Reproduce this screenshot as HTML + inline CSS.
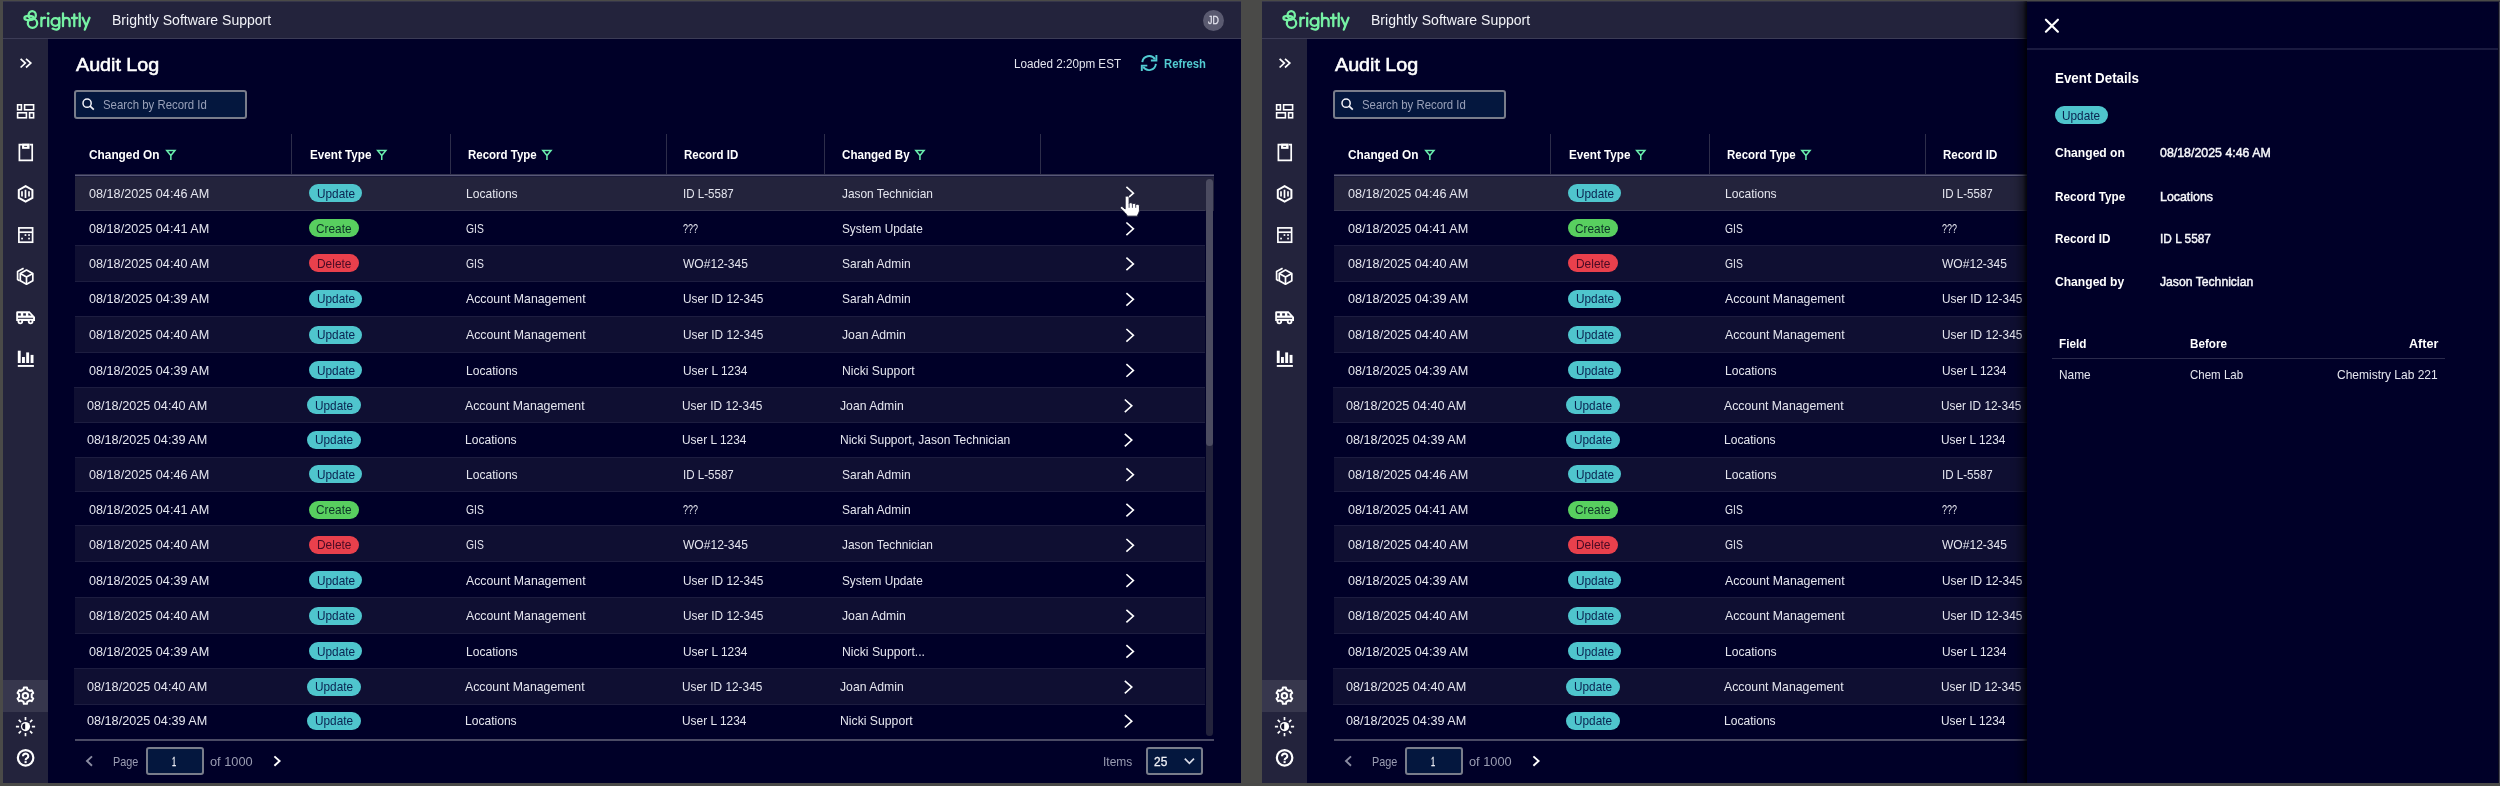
<!DOCTYPE html>
<html><head><meta charset="utf-8"><title>Audit Log</title><style>
html,body{margin:0;padding:0}body{width:2500px;height:786px;overflow:hidden;background:#4a4a48;position:relative;font-family:"Liberation Sans",sans-serif}
.p{position:absolute;top:0;height:786px;overflow:hidden;will-change:transform}
.b{position:absolute;display:block}
.t{position:absolute;display:block;white-space:nowrap;line-height:20px;transform-origin:0 0}
</style></head><body>
<div class="p" style="left:0;width:1241px"><div class="b" style="left:3px;top:2px;width:1238px;height:781px;background:#000028;"></div><div class="b" style="left:3px;top:1px;width:1238px;height:1px;background:#35354a;"></div><div class="b" style="left:3px;top:2px;width:1238px;height:36px;background:#23233c;"></div><div class="b" style="left:3px;top:38px;width:1238px;height:1px;background:#3c3c56;"></div><div class="b" style="left:3px;top:39px;width:45px;height:744px;background:#23233c;"></div><div class="b" style="left:3px;top:680px;width:45px;height:31.5px;background:#37374d;"></div><svg class="b" style="left:0px;top:0px;" width="120" height="40" viewBox="0 0 120 40"><g fill="none" stroke="#76f2a4" stroke-width="2.3" stroke-linecap="round" stroke-linejoin="round"><ellipse cx="32.2" cy="15.2" rx="3.65" ry="4"/><ellipse cx="32.5" cy="23.3" rx="4.7" ry="4.6"/><ellipse cx="29" cy="18" rx="4.6" ry="2.05"/><path d="M41.4 17.6 V26.2 M41.4 21.2 C41.4 18.6 43 17.6 45.2 17.8"/><path d="M48.2 17.8 V26.2"/><circle cx="55.4" cy="22" r="3.9"/><path d="M59.3 17.8 V26.4 C59.3 29.4 56.4 30.6 52.6 28.6"/><path d="M63 13.3 V26.2 M63 21.4 C63 16.8 69.6 16.8 69.6 21.4 V26.2"/><path d="M74.3 14.3 V26.2 M71.9 18 H77"/><path d="M79.7 13.3 V26.2"/><path d="M82.6 17.8 L86.1 25.6 M89.5 17.8 L84.8 29.6"/></g><circle cx="48.2" cy="13.6" r="1.45" fill="#76f2a4"/></svg><span class="t" style="left:111.80px;top:10px;font-size:14px;color:#f2f3f8;transform:scaleX(1.0028);">Brightly Software Support</span><div class="b" style="left:1203px;top:10px;width:21px;height:21px;border-radius:50%;background:#5a5a70"></div><span class="t" style="left:1208.40px;top:10px;font-size:11px;color:#e4e4ee;transform:scaleX(0.8000);-webkit-text-stroke:0.3px #e4e4ee;">JD</span><span class="t" style="left:75.80px;top:55px;font-size:18px;color:#ffffff;transform:scaleX(1.0943);-webkit-text-stroke:0.55px #fff;">Audit Log</span><span class="t" style="left:1014.10px;top:54px;font-size:12.5px;color:#e4e5ee;transform:scaleX(0.9335);">Loaded 2:20pm EST</span><span class="t" style="left:1163.80px;top:54px;font-size:12px;font-weight:700;color:#52cbd2;transform:scaleX(0.9389);">Refresh</span><div class="b" style="left:74.3px;top:90px;width:172.6px;height:28.7px;box-sizing:border-box;border:2px solid #797d8b;border-radius:3px;background:#04173e"></div><span class="t" style="left:102.80px;top:95px;font-size:13px;color:#98a0b8;transform:scaleX(0.8759);">Search by Record Id</span><span class="t" style="left:88.90px;top:145px;font-size:13px;font-weight:700;color:#ffffff;transform:scaleX(0.9113);">Changed On</span><span class="t" style="left:309.50px;top:145px;font-size:13px;font-weight:700;color:#ffffff;transform:scaleX(0.8995);">Event Type</span><span class="t" style="left:467.70px;top:145px;font-size:13px;font-weight:700;color:#ffffff;transform:scaleX(0.8836);">Record Type</span><span class="t" style="left:684.00px;top:145px;font-size:13px;font-weight:700;color:#ffffff;transform:scaleX(0.8847);">Record ID</span><span class="t" style="left:842.30px;top:145px;font-size:13px;font-weight:700;color:#ffffff;transform:scaleX(0.8923);">Changed By</span><div class="b" style="left:291.1px;top:133.5px;width:1px;height:40.5px;background:#2d2d4a;"></div><div class="b" style="left:449.5px;top:133.5px;width:1px;height:40.5px;background:#2d2d4a;"></div><div class="b" style="left:665.8px;top:133.5px;width:1px;height:40.5px;background:#2d2d4a;"></div><div class="b" style="left:824.1px;top:133.5px;width:1px;height:40.5px;background:#2d2d4a;"></div><div class="b" style="left:1039.7px;top:133.5px;width:1px;height:40.5px;background:#2d2d4a;"></div><div class="b" style="left:75.2px;top:174px;width:1139.2px;height:1px;background:#33334f;"></div><div class="b" style="left:75.2px;top:175px;width:1139.2px;height:1px;background:#585878;"></div><div class="b" style="left:75.2px;top:176px;width:1139.2px;height:34.8px;background:#23233c;"></div><div class="b" style="left:75.2px;top:176px;width:1139.2px;height:1px;background:#18183a;"></div><span class="t" style="left:89.00px;top:184px;font-size:13px;color:#e4e5ee;transform:scaleX(0.9731);">08/18/2025 04:46 AM</span><div class="b" style="left:309px;top:183.85px;width:53.2px;height:18px;border-radius:9px;background:#4fc5cd"></div><span class="t" style="left:316.60px;top:184px;font-size:13px;color:#0a2350;transform:scaleX(0.9075);">Update</span><span class="t" style="left:466.40px;top:184px;font-size:13px;color:#e4e5ee;transform:scaleX(0.9276);">Locations</span><span class="t" style="left:683.10px;top:184px;font-size:13px;color:#e4e5ee;transform:scaleX(0.8893);">ID L-5587</span><span class="t" style="left:841.70px;top:184px;font-size:13px;color:#e4e5ee;transform:scaleX(0.9136);">Jason Technician</span><div class="b" style="left:75.2px;top:210.3px;width:1130.1px;height:1px;background:#34344f;"></div><span class="t" style="left:89.00px;top:219px;font-size:13px;color:#e4e5ee;transform:scaleX(0.9731);">08/18/2025 04:41 AM</span><div class="b" style="left:309px;top:219.2px;width:49.6px;height:18px;border-radius:9px;background:#58cf5f"></div><span class="t" style="left:316.05px;top:219px;font-size:13px;color:#0c3328;transform:scaleX(0.9103);">Create</span><span class="t" style="left:466.40px;top:219px;font-size:13px;color:#e4e5ee;transform:scaleX(0.7955);">GIS</span><span class="t" style="left:683.10px;top:219px;font-size:13px;color:#e4e5ee;transform:scaleX(0.6897);">???</span><span class="t" style="left:842.00px;top:219px;font-size:13px;color:#e4e5ee;transform:scaleX(0.9080);">System Update</span><div class="b" style="left:75.2px;top:245.5px;width:1130.1px;height:35.5px;background:#0f0f32;"></div><div class="b" style="left:75.2px;top:245px;width:1130.1px;height:1px;background:#1d1d40;"></div><span class="t" style="left:89.00px;top:254px;font-size:13px;color:#e4e5ee;transform:scaleX(0.9731);">08/18/2025 04:40 AM</span><div class="b" style="left:309px;top:254.3px;width:49.6px;height:18px;border-radius:9px;background:#e9404c"></div><span class="t" style="left:316.55px;top:254px;font-size:13px;color:#4a0a24;transform:scaleX(0.9169);">Delete</span><span class="t" style="left:466.40px;top:254px;font-size:13px;color:#e4e5ee;transform:scaleX(0.7955);">GIS</span><span class="t" style="left:683.10px;top:254px;font-size:13px;color:#e4e5ee;transform:scaleX(0.9269);">WO#12-345</span><span class="t" style="left:842.00px;top:254px;font-size:13px;color:#e4e5ee;transform:scaleX(0.9208);">Sarah Admin</span><div class="b" style="left:75.2px;top:280.5px;width:1130.1px;height:1px;background:#1d1d40;"></div><span class="t" style="left:89.00px;top:289px;font-size:13px;color:#e4e5ee;transform:scaleX(0.9731);">08/18/2025 04:39 AM</span><div class="b" style="left:309px;top:289.75px;width:53.2px;height:18px;border-radius:9px;background:#4fc5cd"></div><span class="t" style="left:316.60px;top:289px;font-size:13px;color:#0a2350;transform:scaleX(0.9075);">Update</span><span class="t" style="left:466.40px;top:289px;font-size:13px;color:#e4e5ee;transform:scaleX(0.9455);">Account Management</span><span class="t" style="left:683.10px;top:289px;font-size:13px;color:#e4e5ee;transform:scaleX(0.9112);">User ID 12-345</span><span class="t" style="left:842.00px;top:289px;font-size:13px;color:#e4e5ee;transform:scaleX(0.9208);">Sarah Admin</span><div class="b" style="left:75.2px;top:316.3px;width:1130.1px;height:36px;background:#0f0f32;"></div><div class="b" style="left:75.2px;top:315.8px;width:1130.1px;height:1px;background:#1d1d40;"></div><span class="t" style="left:89.00px;top:325px;font-size:13px;color:#e4e5ee;transform:scaleX(0.9731);">08/18/2025 04:40 AM</span><div class="b" style="left:309px;top:325.7px;width:53.2px;height:18px;border-radius:9px;background:#4fc5cd"></div><span class="t" style="left:316.60px;top:325px;font-size:13px;color:#0a2350;transform:scaleX(0.9075);">Update</span><span class="t" style="left:466.40px;top:325px;font-size:13px;color:#e4e5ee;transform:scaleX(0.9455);">Account Management</span><span class="t" style="left:683.10px;top:325px;font-size:13px;color:#e4e5ee;transform:scaleX(0.9112);">User ID 12-345</span><span class="t" style="left:841.70px;top:325px;font-size:13px;color:#e4e5ee;transform:scaleX(0.9382);">Joan Admin</span><div class="b" style="left:75.2px;top:351.8px;width:1130.1px;height:1px;background:#1d1d40;"></div><span class="t" style="left:89.00px;top:361px;font-size:13px;color:#e4e5ee;transform:scaleX(0.9731);">08/18/2025 04:39 AM</span><div class="b" style="left:309px;top:360.85px;width:53.2px;height:18px;border-radius:9px;background:#4fc5cd"></div><span class="t" style="left:316.60px;top:361px;font-size:13px;color:#0a2350;transform:scaleX(0.9075);">Update</span><span class="t" style="left:466.40px;top:361px;font-size:13px;color:#e4e5ee;transform:scaleX(0.9276);">Locations</span><span class="t" style="left:683.10px;top:361px;font-size:13px;color:#e4e5ee;transform:scaleX(0.9165);">User L 1234</span><span class="t" style="left:842.00px;top:361px;font-size:13px;color:#e4e5ee;transform:scaleX(0.9396);">Nicki Support</span><div class="b" style="left:73.6px;top:387.1px;width:1131.7px;height:35.2px;background:#0f0f32;"></div><div class="b" style="left:73.6px;top:386.6px;width:1131.7px;height:1px;background:#1d1d40;"></div><span class="t" style="left:87.40px;top:396px;font-size:13px;color:#e4e5ee;transform:scaleX(0.9731);">08/18/2025 04:40 AM</span><div class="b" style="left:307.4px;top:396.2px;width:53.2px;height:18px;border-radius:9px;background:#4fc5cd"></div><span class="t" style="left:315.00px;top:396px;font-size:13px;color:#0a2350;transform:scaleX(0.9075);">Update</span><span class="t" style="left:464.80px;top:396px;font-size:13px;color:#e4e5ee;transform:scaleX(0.9455);">Account Management</span><span class="t" style="left:681.50px;top:396px;font-size:13px;color:#e4e5ee;transform:scaleX(0.9112);">User ID 12-345</span><span class="t" style="left:840.10px;top:396px;font-size:13px;color:#e4e5ee;transform:scaleX(0.9382);">Joan Admin</span><div class="b" style="left:73.6px;top:421.8px;width:1131.7px;height:1px;background:#1d1d40;"></div><span class="t" style="left:87.40px;top:430px;font-size:13px;color:#e4e5ee;transform:scaleX(0.9731);">08/18/2025 04:39 AM</span><div class="b" style="left:307.4px;top:430.5px;width:53.2px;height:18px;border-radius:9px;background:#4fc5cd"></div><span class="t" style="left:315.00px;top:430px;font-size:13px;color:#0a2350;transform:scaleX(0.9075);">Update</span><span class="t" style="left:464.80px;top:430px;font-size:13px;color:#e4e5ee;transform:scaleX(0.9276);">Locations</span><span class="t" style="left:681.50px;top:430px;font-size:13px;color:#e4e5ee;transform:scaleX(0.9165);">User L 1234</span><span class="t" style="left:840.40px;top:430px;font-size:13px;color:#e4e5ee;transform:scaleX(0.9255);">Nicki Support, Jason Technician</span><div class="b" style="left:75.2px;top:457.2px;width:1130.1px;height:34.1px;background:#0f0f32;"></div><div class="b" style="left:75.2px;top:456.7px;width:1130.1px;height:1px;background:#1d1d40;"></div><span class="t" style="left:89.00px;top:465px;font-size:13px;color:#e4e5ee;transform:scaleX(0.9731);">08/18/2025 04:46 AM</span><div class="b" style="left:309px;top:465.1px;width:53.2px;height:18px;border-radius:9px;background:#4fc5cd"></div><span class="t" style="left:316.60px;top:465px;font-size:13px;color:#0a2350;transform:scaleX(0.9075);">Update</span><span class="t" style="left:466.40px;top:465px;font-size:13px;color:#e4e5ee;transform:scaleX(0.9276);">Locations</span><span class="t" style="left:683.10px;top:465px;font-size:13px;color:#e4e5ee;transform:scaleX(0.8893);">ID L-5587</span><span class="t" style="left:842.00px;top:465px;font-size:13px;color:#e4e5ee;transform:scaleX(0.9208);">Sarah Admin</span><div class="b" style="left:75.2px;top:490.8px;width:1130.1px;height:1px;background:#1d1d40;"></div><span class="t" style="left:89.00px;top:500px;font-size:13px;color:#e4e5ee;transform:scaleX(0.9731);">08/18/2025 04:41 AM</span><div class="b" style="left:309px;top:500.5px;width:49.6px;height:18px;border-radius:9px;background:#58cf5f"></div><span class="t" style="left:316.05px;top:500px;font-size:13px;color:#0c3328;transform:scaleX(0.9103);">Create</span><span class="t" style="left:466.40px;top:500px;font-size:13px;color:#e4e5ee;transform:scaleX(0.7955);">GIS</span><span class="t" style="left:683.10px;top:500px;font-size:13px;color:#e4e5ee;transform:scaleX(0.6897);">???</span><span class="t" style="left:842.00px;top:500px;font-size:13px;color:#e4e5ee;transform:scaleX(0.9208);">Sarah Admin</span><div class="b" style="left:75.2px;top:525.8px;width:1130.1px;height:35.6px;background:#0f0f32;"></div><div class="b" style="left:75.2px;top:525.3px;width:1130.1px;height:1px;background:#1d1d40;"></div><span class="t" style="left:89.00px;top:535px;font-size:13px;color:#e4e5ee;transform:scaleX(0.9731);">08/18/2025 04:40 AM</span><div class="b" style="left:309px;top:535.7px;width:49.6px;height:18px;border-radius:9px;background:#e9404c"></div><span class="t" style="left:316.55px;top:535px;font-size:13px;color:#4a0a24;transform:scaleX(0.9169);">Delete</span><span class="t" style="left:466.40px;top:535px;font-size:13px;color:#e4e5ee;transform:scaleX(0.7955);">GIS</span><span class="t" style="left:683.10px;top:535px;font-size:13px;color:#e4e5ee;transform:scaleX(0.9269);">WO#12-345</span><span class="t" style="left:841.70px;top:535px;font-size:13px;color:#e4e5ee;transform:scaleX(0.9136);">Jason Technician</span><div class="b" style="left:75.2px;top:560.9px;width:1130.1px;height:1px;background:#1d1d40;"></div><span class="t" style="left:89.00px;top:571px;font-size:13px;color:#e4e5ee;transform:scaleX(0.9731);">08/18/2025 04:39 AM</span><div class="b" style="left:309px;top:570.95px;width:53.2px;height:18px;border-radius:9px;background:#4fc5cd"></div><span class="t" style="left:316.60px;top:571px;font-size:13px;color:#0a2350;transform:scaleX(0.9075);">Update</span><span class="t" style="left:466.40px;top:571px;font-size:13px;color:#e4e5ee;transform:scaleX(0.9455);">Account Management</span><span class="t" style="left:683.10px;top:571px;font-size:13px;color:#e4e5ee;transform:scaleX(0.9112);">User ID 12-345</span><span class="t" style="left:842.00px;top:571px;font-size:13px;color:#e4e5ee;transform:scaleX(0.9080);">System Update</span><div class="b" style="left:75.2px;top:597.2px;width:1130.1px;height:36px;background:#0f0f32;"></div><div class="b" style="left:75.2px;top:596.7px;width:1130.1px;height:1px;background:#1d1d40;"></div><span class="t" style="left:89.00px;top:606px;font-size:13px;color:#e4e5ee;transform:scaleX(0.9731);">08/18/2025 04:40 AM</span><div class="b" style="left:309px;top:606.5px;width:53.2px;height:18px;border-radius:9px;background:#4fc5cd"></div><span class="t" style="left:316.60px;top:606px;font-size:13px;color:#0a2350;transform:scaleX(0.9075);">Update</span><span class="t" style="left:466.40px;top:606px;font-size:13px;color:#e4e5ee;transform:scaleX(0.9455);">Account Management</span><span class="t" style="left:683.10px;top:606px;font-size:13px;color:#e4e5ee;transform:scaleX(0.9112);">User ID 12-345</span><span class="t" style="left:841.70px;top:606px;font-size:13px;color:#e4e5ee;transform:scaleX(0.9382);">Joan Admin</span><div class="b" style="left:75.2px;top:632.7px;width:1130.1px;height:1px;background:#1d1d40;"></div><span class="t" style="left:89.00px;top:642px;font-size:13px;color:#e4e5ee;transform:scaleX(0.9731);">08/18/2025 04:39 AM</span><div class="b" style="left:309px;top:641.8px;width:53.2px;height:18px;border-radius:9px;background:#4fc5cd"></div><span class="t" style="left:316.60px;top:642px;font-size:13px;color:#0a2350;transform:scaleX(0.9075);">Update</span><span class="t" style="left:466.40px;top:642px;font-size:13px;color:#e4e5ee;transform:scaleX(0.9276);">Locations</span><span class="t" style="left:683.10px;top:642px;font-size:13px;color:#e4e5ee;transform:scaleX(0.9165);">User L 1234</span><span class="t" style="left:842.00px;top:642px;font-size:13px;color:#e4e5ee;transform:scaleX(0.9418);">Nicki Support...</span><div class="b" style="left:73.6px;top:668px;width:1131.7px;height:36px;background:#0f0f32;"></div><div class="b" style="left:73.6px;top:667.5px;width:1131.7px;height:1px;background:#1d1d40;"></div><span class="t" style="left:87.40px;top:677px;font-size:13px;color:#e4e5ee;transform:scaleX(0.9731);">08/18/2025 04:40 AM</span><div class="b" style="left:307.4px;top:677.5px;width:53.2px;height:18px;border-radius:9px;background:#4fc5cd"></div><span class="t" style="left:315.00px;top:677px;font-size:13px;color:#0a2350;transform:scaleX(0.9075);">Update</span><span class="t" style="left:464.80px;top:677px;font-size:13px;color:#e4e5ee;transform:scaleX(0.9455);">Account Management</span><span class="t" style="left:681.50px;top:677px;font-size:13px;color:#e4e5ee;transform:scaleX(0.9112);">User ID 12-345</span><span class="t" style="left:840.10px;top:677px;font-size:13px;color:#e4e5ee;transform:scaleX(0.9382);">Joan Admin</span><div class="b" style="left:73.6px;top:703.5px;width:1131.7px;height:1px;background:#1d1d40;"></div><span class="t" style="left:87.40px;top:711px;font-size:13px;color:#e4e5ee;transform:scaleX(0.9731);">08/18/2025 04:39 AM</span><div class="b" style="left:307.4px;top:711.6px;width:53.2px;height:18px;border-radius:9px;background:#4fc5cd"></div><span class="t" style="left:315.00px;top:711px;font-size:13px;color:#0a2350;transform:scaleX(0.9075);">Update</span><span class="t" style="left:464.80px;top:711px;font-size:13px;color:#e4e5ee;transform:scaleX(0.9276);">Locations</span><span class="t" style="left:681.50px;top:711px;font-size:13px;color:#e4e5ee;transform:scaleX(0.9165);">User L 1234</span><span class="t" style="left:840.40px;top:711px;font-size:13px;color:#e4e5ee;transform:scaleX(0.9396);">Nicki Support</span><div class="b" style="left:1205.6px;top:178.7px;width:7.1px;height:557px;border-radius:3.5px;background:#23233c"></div><div class="b" style="left:1205.6px;top:178.7px;width:7.1px;height:267px;border-radius:3.5px;background:#4b4b60"></div><div class="b" style="left:75.2px;top:739px;width:1139.2px;height:2px;background:#4b4b65;"></div><span class="t" style="left:113.30px;top:752px;font-size:13px;color:#9a9cb2;transform:scaleX(0.8362);">Page</span><div class="b" style="left:146.2px;top:746.8px;width:57.7px;height:28.5px;box-sizing:border-box;border:2px solid #797d8b;border-radius:3px;background:#04173e"></div><span class="t" style="left:172.20px;top:752px;font-size:13px;color:#f0f1f7;transform:scaleX(0.5655);-webkit-text-stroke:0.3px #f0f1f7;">1</span><span class="t" style="left:210.30px;top:752px;font-size:13px;color:#9a9cb2;transform:scaleX(0.9844);">of 1000</span><span class="t" style="left:1102.60px;top:752px;font-size:13px;color:#9a9cb2;transform:scaleX(0.9197);">Items</span><div class="b" style="left:1146.2px;top:746.8px;width:57.1px;height:28.5px;box-sizing:border-box;border:2px solid #797d8b;border-radius:3px;background:#04173e"></div><span class="t" style="left:1153.80px;top:752px;font-size:13px;color:#f0f1f7;transform:scaleX(0.9172);-webkit-text-stroke:0.3px #f0f1f7;">25</span><svg class="b" style="left:0px;top:0px;" width="1241" height="786" viewBox="0 0 1241 786"><path d="M20.6 58.8 L25.3 63.1 L20.6 67.5 M26 58.8 L30.8 63.1 L26 67.5" fill="none" stroke="#fff" stroke-width="1.7"/><g fill="none" stroke="#fff" stroke-width="1.6"><rect x="17.6" y="104.8" width="3.8" height="5"/><rect x="24.6" y="104.8" width="9" height="5"/><rect x="17.6" y="112.8" width="8.8" height="5"/><rect x="29.6" y="112.8" width="4" height="5"/></g><g fill="none" stroke="#fff" stroke-width="1.7"><path d="M22 144.7 H19.4 V160.3 H32.2 V144.7 H29.6"/><rect x="22.9" y="144.4" width="5.8" height="3.6" fill="#fff"/></g><rect x="24.2" y="145.9" width="2.9" height="0.9" fill="#23233c"/><g fill="none" stroke="#fff"><path d="M25.6 186.2 L32.4 190 V197.8 L25.6 201.7 L18.8 197.8 V190 Z" stroke-width="2"/><path d="M25.5 189.8 V198 M22 191.3 V196.6 M29 191.3 V196.6" stroke-width="1.7"/></g><g fill="none" stroke="#fff" stroke-width="1.7"><rect x="18.9" y="227.9" width="13.7" height="14.3"/><path d="M18.9 232.2 H32.6"/></g><g fill="#fff"><rect x="24.6" y="234.2" width="1.7" height="1.7"/><rect x="28.2" y="234.2" width="1.7" height="1.7"/><rect x="21.2" y="237.7" width="1.7" height="1.7"/><rect x="28.2" y="237.7" width="1.7" height="1.7"/></g><g fill="none" stroke="#fff" stroke-width="1.7" stroke-linejoin="round"><path d="M26.5 270 L32.8 273.5 V280.7 L26.5 284.2 L20.3 280.7 V273.5 Z"/><path d="M20.3 273.5 L26.5 277 L32.8 273.5 M26.5 277 V284.2"/><path d="M23.6 268.2 L17.6 271.6 V279.6 L19.6 280.8"/></g><path d="M17.5 311.3 H29.6 L35 317 V321.1 H16.2 V312.6 A1.3 1.3 0 0 1 17.5 311.3 Z" fill="#fff"/><circle cx="20.3" cy="321.5" r="2.8" fill="#fff"/><circle cx="30.6" cy="321.5" r="2.8" fill="#fff"/><g fill="#23233c"><rect x="18.1" y="313.3" width="2.7" height="2.3"/><rect x="23.2" y="313.3" width="2.7" height="2.3"/><path d="M28.3 313.3 H29.2 L31.4 315.6 H28.3 Z"/><rect x="17.9" y="317.8" width="15.2" height="1"/><circle cx="20.3" cy="321.6" r="1"/><circle cx="30.6" cy="321.6" r="1"/></g><g fill="#fff"><rect x="17.8" y="350.7" width="2.9" height="12.3"/><rect x="22" y="357" width="2.9" height="6"/><rect x="26.2" y="352.4" width="2.9" height="10.6"/><rect x="30.6" y="354.9" width="2.9" height="8.1"/><rect x="17.8" y="365" width="16.1" height="1.9"/></g><path d="M23.50 689.48 L23.82 687.55 L26.98 687.55 L27.30 689.48 L29.83 690.95 L31.66 690.25 L33.25 693.00 L31.73 694.24 L31.73 697.16 L33.25 698.40 L31.66 701.15 L29.83 700.45 L27.30 701.92 L26.98 703.85 L23.82 703.85 L23.50 701.92 L20.97 700.45 L19.14 701.15 L17.55 698.40 L19.07 697.16 L19.07 694.24 L17.55 693.00 L19.14 690.25 L20.97 690.95 Z" fill="none" stroke="#fff" stroke-width="2" stroke-linejoin="round"/><circle cx="25.4" cy="695.7" r="2.7" fill="none" stroke="#fff" stroke-width="2"/><path d="M31.90 726.60 L35.10 726.60 M30.03 731.13 L32.29 733.39 M25.50 733.00 L25.50 736.20 M20.97 731.13 L18.71 733.39 M19.10 726.60 L15.90 726.60 M20.97 722.07 L18.71 719.81 M25.50 720.20 L25.50 717.00 M30.03 722.07 L32.29 719.81 " stroke="#fff" stroke-width="1.7" fill="none"/><circle cx="25.5" cy="726.6" r="4.6" fill="#fff"/><path d="M25.2 723.6 a3 3 0 0 0 0 6 Z" fill="#101028"/><circle cx="25.6" cy="757.8" r="7.75" fill="none" stroke="#fff" stroke-width="2.2"/><path d="M23 756.2 a2.65 2.5 0 1 1 4.1 2 c-1.1 .7 -1.5 1.1 -1.5 2" fill="none" stroke="#fff" stroke-width="2.1"/><rect x="24.55" y="761.1" width="2.1" height="2" fill="#fff"/><path d="M166.75 150.55 h8.2 l-4.1 5 z M170.85 155.40 v4.6" fill="none" stroke="#6aeeae" stroke-width="1.5" stroke-linejoin="miter"/><path d="M377.65 150.55 h8.2 l-4.1 5 z M381.75 155.40 v4.6" fill="none" stroke="#6aeeae" stroke-width="1.5" stroke-linejoin="miter"/><path d="M542.85 150.55 h8.2 l-4.1 5 z M546.95 155.40 v4.6" fill="none" stroke="#6aeeae" stroke-width="1.5" stroke-linejoin="miter"/><path d="M915.85 150.55 h8.2 l-4.1 5 z M919.95 155.40 v4.6" fill="none" stroke="#6aeeae" stroke-width="1.5" stroke-linejoin="miter"/><path d="M1126.40 186.85 l7 6.3 l-7 6.3" fill="none" stroke="#fff" stroke-width="1.6"/><path d="M1126.40 222.50 l7 6.3 l-7 6.3" fill="none" stroke="#fff" stroke-width="1.6"/><path d="M1126.40 257.60 l7 6.3 l-7 6.3" fill="none" stroke="#fff" stroke-width="1.6"/><path d="M1126.40 293.05 l7 6.3 l-7 6.3" fill="none" stroke="#fff" stroke-width="1.6"/><path d="M1126.40 329.00 l7 6.3 l-7 6.3" fill="none" stroke="#fff" stroke-width="1.6"/><path d="M1126.40 364.15 l7 6.3 l-7 6.3" fill="none" stroke="#fff" stroke-width="1.6"/><path d="M1124.80 399.50 l7 6.3 l-7 6.3" fill="none" stroke="#fff" stroke-width="1.6"/><path d="M1124.80 433.80 l7 6.3 l-7 6.3" fill="none" stroke="#fff" stroke-width="1.6"/><path d="M1126.40 468.40 l7 6.3 l-7 6.3" fill="none" stroke="#fff" stroke-width="1.6"/><path d="M1126.40 503.80 l7 6.3 l-7 6.3" fill="none" stroke="#fff" stroke-width="1.6"/><path d="M1126.40 539.00 l7 6.3 l-7 6.3" fill="none" stroke="#fff" stroke-width="1.6"/><path d="M1126.40 574.25 l7 6.3 l-7 6.3" fill="none" stroke="#fff" stroke-width="1.6"/><path d="M1126.40 609.80 l7 6.3 l-7 6.3" fill="none" stroke="#fff" stroke-width="1.6"/><path d="M1126.40 645.10 l7 6.3 l-7 6.3" fill="none" stroke="#fff" stroke-width="1.6"/><path d="M1124.80 680.80 l7 6.3 l-7 6.3" fill="none" stroke="#fff" stroke-width="1.6"/><path d="M1124.80 714.90 l7 6.3 l-7 6.3" fill="none" stroke="#fff" stroke-width="1.6"/><circle cx="87.1" cy="103.2" r="4.1" fill="none" stroke="#f4f4fa" stroke-width="1.5"/><path d="M90.1 106.2 L93.8 109.6" stroke="#f4f4fa" stroke-width="1.7"/><g fill="none" stroke="#52cbd2" stroke-width="1.9"><path d="M1142.3 62.2 A6.9 6.9 0 0 1 1155 59.3"/><path d="M1156.4 55 V60.5 H1150.9"/><path d="M1155.9 63.9 A6.9 6.9 0 0 1 1143.2 66.8"/><path d="M1141.8 71.1 V65.6 H1147.3"/></g><path d="M92 756.4 L87 761 L92 765.7" fill="none" stroke="#8a8ca2" stroke-width="1.9"/><path d="M274.4 756.4 L279.6 761 L274.4 765.7" fill="none" stroke="#fff" stroke-width="1.9"/><path d="M1184.8 758.6 L1189.4 763.3 L1194 758.6" fill="none" stroke="#d8dae6" stroke-width="1.7"/></svg><svg class="b" style="left:1118.6px;top:195px" width="24.2" height="23.4" viewBox="-1 -1 22 23" preserveAspectRatio="none"><path d="M4.6 1.6 C4.6 -0.4 8.2 -0.4 8.2 1.6 V7.4 C8.6 6.2 11 6.2 11.2 7.6 V8 C11.6 6.8 14 6.8 14.2 8.2 V8.8 C14.8 7.8 17.4 7.8 17.6 9.6 V14 C17.6 16.5 16 17.5 15.8 19.8 H6.6 C6 17.5 3.5 15.5 0.5 12.3 C-0.4 11 1 9.6 2.2 10.6 L4.6 12.8 Z" fill="#fff" stroke="#1a1a32" stroke-width="0.9" stroke-linejoin="round"/><path d="M8.2 7.4 V11.6 M11.2 8 V11.6 M14.2 8.8 V11.6" stroke="#2a2a44" stroke-width=".8" fill="none"/></svg></div>
<div class="p" style="left:1259px;width:1241px"><div class="b" style="left:3px;top:2px;width:1238px;height:781px;background:#000028;"></div><div class="b" style="left:3px;top:1px;width:1238px;height:1px;background:#35354a;"></div><div class="b" style="left:3px;top:2px;width:1238px;height:36px;background:#23233c;"></div><div class="b" style="left:3px;top:38px;width:1238px;height:1px;background:#3c3c56;"></div><div class="b" style="left:3px;top:39px;width:45px;height:744px;background:#23233c;"></div><div class="b" style="left:3px;top:680px;width:45px;height:31.5px;background:#37374d;"></div><svg class="b" style="left:0px;top:0px;" width="120" height="40" viewBox="0 0 120 40"><g fill="none" stroke="#76f2a4" stroke-width="2.3" stroke-linecap="round" stroke-linejoin="round"><ellipse cx="32.2" cy="15.2" rx="3.65" ry="4"/><ellipse cx="32.5" cy="23.3" rx="4.7" ry="4.6"/><ellipse cx="29" cy="18" rx="4.6" ry="2.05"/><path d="M41.4 17.6 V26.2 M41.4 21.2 C41.4 18.6 43 17.6 45.2 17.8"/><path d="M48.2 17.8 V26.2"/><circle cx="55.4" cy="22" r="3.9"/><path d="M59.3 17.8 V26.4 C59.3 29.4 56.4 30.6 52.6 28.6"/><path d="M63 13.3 V26.2 M63 21.4 C63 16.8 69.6 16.8 69.6 21.4 V26.2"/><path d="M74.3 14.3 V26.2 M71.9 18 H77"/><path d="M79.7 13.3 V26.2"/><path d="M82.6 17.8 L86.1 25.6 M89.5 17.8 L84.8 29.6"/></g><circle cx="48.2" cy="13.6" r="1.45" fill="#76f2a4"/></svg><span class="t" style="left:111.80px;top:10px;font-size:14px;color:#f2f3f8;transform:scaleX(1.0028);">Brightly Software Support</span><div class="b" style="left:1203px;top:10px;width:21px;height:21px;border-radius:50%;background:#5a5a70"></div><span class="t" style="left:1208.40px;top:10px;font-size:11px;color:#e4e4ee;transform:scaleX(0.8000);-webkit-text-stroke:0.3px #e4e4ee;">JD</span><span class="t" style="left:75.80px;top:55px;font-size:18px;color:#ffffff;transform:scaleX(1.0943);-webkit-text-stroke:0.55px #fff;">Audit Log</span><span class="t" style="left:1014.10px;top:54px;font-size:12.5px;color:#e4e5ee;transform:scaleX(0.9335);">Loaded 2:20pm EST</span><span class="t" style="left:1163.80px;top:54px;font-size:12px;font-weight:700;color:#52cbd2;transform:scaleX(0.9389);">Refresh</span><div class="b" style="left:74.3px;top:90px;width:172.6px;height:28.7px;box-sizing:border-box;border:2px solid #797d8b;border-radius:3px;background:#04173e"></div><span class="t" style="left:102.80px;top:95px;font-size:13px;color:#98a0b8;transform:scaleX(0.8759);">Search by Record Id</span><span class="t" style="left:88.90px;top:145px;font-size:13px;font-weight:700;color:#ffffff;transform:scaleX(0.9113);">Changed On</span><span class="t" style="left:309.50px;top:145px;font-size:13px;font-weight:700;color:#ffffff;transform:scaleX(0.8995);">Event Type</span><span class="t" style="left:467.70px;top:145px;font-size:13px;font-weight:700;color:#ffffff;transform:scaleX(0.8836);">Record Type</span><span class="t" style="left:684.00px;top:145px;font-size:13px;font-weight:700;color:#ffffff;transform:scaleX(0.8847);">Record ID</span><span class="t" style="left:842.30px;top:145px;font-size:13px;font-weight:700;color:#ffffff;transform:scaleX(0.8923);">Changed By</span><div class="b" style="left:291.1px;top:133.5px;width:1px;height:40.5px;background:#2d2d4a;"></div><div class="b" style="left:449.5px;top:133.5px;width:1px;height:40.5px;background:#2d2d4a;"></div><div class="b" style="left:665.8px;top:133.5px;width:1px;height:40.5px;background:#2d2d4a;"></div><div class="b" style="left:824.1px;top:133.5px;width:1px;height:40.5px;background:#2d2d4a;"></div><div class="b" style="left:1039.7px;top:133.5px;width:1px;height:40.5px;background:#2d2d4a;"></div><div class="b" style="left:75.2px;top:174px;width:1139.2px;height:1px;background:#33334f;"></div><div class="b" style="left:75.2px;top:175px;width:1139.2px;height:1px;background:#585878;"></div><div class="b" style="left:75.2px;top:176px;width:1139.2px;height:34.8px;background:#23233c;"></div><div class="b" style="left:75.2px;top:176px;width:1139.2px;height:1px;background:#18183a;"></div><span class="t" style="left:89.00px;top:184px;font-size:13px;color:#e4e5ee;transform:scaleX(0.9731);">08/18/2025 04:46 AM</span><div class="b" style="left:309px;top:183.85px;width:53.2px;height:18px;border-radius:9px;background:#4fc5cd"></div><span class="t" style="left:316.60px;top:184px;font-size:13px;color:#0a2350;transform:scaleX(0.9075);">Update</span><span class="t" style="left:466.40px;top:184px;font-size:13px;color:#e4e5ee;transform:scaleX(0.9276);">Locations</span><span class="t" style="left:683.10px;top:184px;font-size:13px;color:#e4e5ee;transform:scaleX(0.8893);">ID L-5587</span><span class="t" style="left:841.70px;top:184px;font-size:13px;color:#e4e5ee;transform:scaleX(0.9136);">Jason Technician</span><div class="b" style="left:75.2px;top:210.3px;width:1130.1px;height:1px;background:#34344f;"></div><span class="t" style="left:89.00px;top:219px;font-size:13px;color:#e4e5ee;transform:scaleX(0.9731);">08/18/2025 04:41 AM</span><div class="b" style="left:309px;top:219.2px;width:49.6px;height:18px;border-radius:9px;background:#58cf5f"></div><span class="t" style="left:316.05px;top:219px;font-size:13px;color:#0c3328;transform:scaleX(0.9103);">Create</span><span class="t" style="left:466.40px;top:219px;font-size:13px;color:#e4e5ee;transform:scaleX(0.7955);">GIS</span><span class="t" style="left:683.10px;top:219px;font-size:13px;color:#e4e5ee;transform:scaleX(0.6897);">???</span><span class="t" style="left:842.00px;top:219px;font-size:13px;color:#e4e5ee;transform:scaleX(0.9080);">System Update</span><div class="b" style="left:75.2px;top:245.5px;width:1130.1px;height:35.5px;background:#0f0f32;"></div><div class="b" style="left:75.2px;top:245px;width:1130.1px;height:1px;background:#1d1d40;"></div><span class="t" style="left:89.00px;top:254px;font-size:13px;color:#e4e5ee;transform:scaleX(0.9731);">08/18/2025 04:40 AM</span><div class="b" style="left:309px;top:254.3px;width:49.6px;height:18px;border-radius:9px;background:#e9404c"></div><span class="t" style="left:316.55px;top:254px;font-size:13px;color:#4a0a24;transform:scaleX(0.9169);">Delete</span><span class="t" style="left:466.40px;top:254px;font-size:13px;color:#e4e5ee;transform:scaleX(0.7955);">GIS</span><span class="t" style="left:683.10px;top:254px;font-size:13px;color:#e4e5ee;transform:scaleX(0.9269);">WO#12-345</span><span class="t" style="left:842.00px;top:254px;font-size:13px;color:#e4e5ee;transform:scaleX(0.9208);">Sarah Admin</span><div class="b" style="left:75.2px;top:280.5px;width:1130.1px;height:1px;background:#1d1d40;"></div><span class="t" style="left:89.00px;top:289px;font-size:13px;color:#e4e5ee;transform:scaleX(0.9731);">08/18/2025 04:39 AM</span><div class="b" style="left:309px;top:289.75px;width:53.2px;height:18px;border-radius:9px;background:#4fc5cd"></div><span class="t" style="left:316.60px;top:289px;font-size:13px;color:#0a2350;transform:scaleX(0.9075);">Update</span><span class="t" style="left:466.40px;top:289px;font-size:13px;color:#e4e5ee;transform:scaleX(0.9455);">Account Management</span><span class="t" style="left:683.10px;top:289px;font-size:13px;color:#e4e5ee;transform:scaleX(0.9112);">User ID 12-345</span><span class="t" style="left:842.00px;top:289px;font-size:13px;color:#e4e5ee;transform:scaleX(0.9208);">Sarah Admin</span><div class="b" style="left:75.2px;top:316.3px;width:1130.1px;height:36px;background:#0f0f32;"></div><div class="b" style="left:75.2px;top:315.8px;width:1130.1px;height:1px;background:#1d1d40;"></div><span class="t" style="left:89.00px;top:325px;font-size:13px;color:#e4e5ee;transform:scaleX(0.9731);">08/18/2025 04:40 AM</span><div class="b" style="left:309px;top:325.7px;width:53.2px;height:18px;border-radius:9px;background:#4fc5cd"></div><span class="t" style="left:316.60px;top:325px;font-size:13px;color:#0a2350;transform:scaleX(0.9075);">Update</span><span class="t" style="left:466.40px;top:325px;font-size:13px;color:#e4e5ee;transform:scaleX(0.9455);">Account Management</span><span class="t" style="left:683.10px;top:325px;font-size:13px;color:#e4e5ee;transform:scaleX(0.9112);">User ID 12-345</span><span class="t" style="left:841.70px;top:325px;font-size:13px;color:#e4e5ee;transform:scaleX(0.9382);">Joan Admin</span><div class="b" style="left:75.2px;top:351.8px;width:1130.1px;height:1px;background:#1d1d40;"></div><span class="t" style="left:89.00px;top:361px;font-size:13px;color:#e4e5ee;transform:scaleX(0.9731);">08/18/2025 04:39 AM</span><div class="b" style="left:309px;top:360.85px;width:53.2px;height:18px;border-radius:9px;background:#4fc5cd"></div><span class="t" style="left:316.60px;top:361px;font-size:13px;color:#0a2350;transform:scaleX(0.9075);">Update</span><span class="t" style="left:466.40px;top:361px;font-size:13px;color:#e4e5ee;transform:scaleX(0.9276);">Locations</span><span class="t" style="left:683.10px;top:361px;font-size:13px;color:#e4e5ee;transform:scaleX(0.9165);">User L 1234</span><span class="t" style="left:842.00px;top:361px;font-size:13px;color:#e4e5ee;transform:scaleX(0.9396);">Nicki Support</span><div class="b" style="left:73.6px;top:387.1px;width:1131.7px;height:35.2px;background:#0f0f32;"></div><div class="b" style="left:73.6px;top:386.6px;width:1131.7px;height:1px;background:#1d1d40;"></div><span class="t" style="left:87.40px;top:396px;font-size:13px;color:#e4e5ee;transform:scaleX(0.9731);">08/18/2025 04:40 AM</span><div class="b" style="left:307.4px;top:396.2px;width:53.2px;height:18px;border-radius:9px;background:#4fc5cd"></div><span class="t" style="left:315.00px;top:396px;font-size:13px;color:#0a2350;transform:scaleX(0.9075);">Update</span><span class="t" style="left:464.80px;top:396px;font-size:13px;color:#e4e5ee;transform:scaleX(0.9455);">Account Management</span><span class="t" style="left:681.50px;top:396px;font-size:13px;color:#e4e5ee;transform:scaleX(0.9112);">User ID 12-345</span><span class="t" style="left:840.10px;top:396px;font-size:13px;color:#e4e5ee;transform:scaleX(0.9382);">Joan Admin</span><div class="b" style="left:73.6px;top:421.8px;width:1131.7px;height:1px;background:#1d1d40;"></div><span class="t" style="left:87.40px;top:430px;font-size:13px;color:#e4e5ee;transform:scaleX(0.9731);">08/18/2025 04:39 AM</span><div class="b" style="left:307.4px;top:430.5px;width:53.2px;height:18px;border-radius:9px;background:#4fc5cd"></div><span class="t" style="left:315.00px;top:430px;font-size:13px;color:#0a2350;transform:scaleX(0.9075);">Update</span><span class="t" style="left:464.80px;top:430px;font-size:13px;color:#e4e5ee;transform:scaleX(0.9276);">Locations</span><span class="t" style="left:681.50px;top:430px;font-size:13px;color:#e4e5ee;transform:scaleX(0.9165);">User L 1234</span><span class="t" style="left:840.40px;top:430px;font-size:13px;color:#e4e5ee;transform:scaleX(0.9255);">Nicki Support, Jason Technician</span><div class="b" style="left:75.2px;top:457.2px;width:1130.1px;height:34.1px;background:#0f0f32;"></div><div class="b" style="left:75.2px;top:456.7px;width:1130.1px;height:1px;background:#1d1d40;"></div><span class="t" style="left:89.00px;top:465px;font-size:13px;color:#e4e5ee;transform:scaleX(0.9731);">08/18/2025 04:46 AM</span><div class="b" style="left:309px;top:465.1px;width:53.2px;height:18px;border-radius:9px;background:#4fc5cd"></div><span class="t" style="left:316.60px;top:465px;font-size:13px;color:#0a2350;transform:scaleX(0.9075);">Update</span><span class="t" style="left:466.40px;top:465px;font-size:13px;color:#e4e5ee;transform:scaleX(0.9276);">Locations</span><span class="t" style="left:683.10px;top:465px;font-size:13px;color:#e4e5ee;transform:scaleX(0.8893);">ID L-5587</span><span class="t" style="left:842.00px;top:465px;font-size:13px;color:#e4e5ee;transform:scaleX(0.9208);">Sarah Admin</span><div class="b" style="left:75.2px;top:490.8px;width:1130.1px;height:1px;background:#1d1d40;"></div><span class="t" style="left:89.00px;top:500px;font-size:13px;color:#e4e5ee;transform:scaleX(0.9731);">08/18/2025 04:41 AM</span><div class="b" style="left:309px;top:500.5px;width:49.6px;height:18px;border-radius:9px;background:#58cf5f"></div><span class="t" style="left:316.05px;top:500px;font-size:13px;color:#0c3328;transform:scaleX(0.9103);">Create</span><span class="t" style="left:466.40px;top:500px;font-size:13px;color:#e4e5ee;transform:scaleX(0.7955);">GIS</span><span class="t" style="left:683.10px;top:500px;font-size:13px;color:#e4e5ee;transform:scaleX(0.6897);">???</span><span class="t" style="left:842.00px;top:500px;font-size:13px;color:#e4e5ee;transform:scaleX(0.9208);">Sarah Admin</span><div class="b" style="left:75.2px;top:525.8px;width:1130.1px;height:35.6px;background:#0f0f32;"></div><div class="b" style="left:75.2px;top:525.3px;width:1130.1px;height:1px;background:#1d1d40;"></div><span class="t" style="left:89.00px;top:535px;font-size:13px;color:#e4e5ee;transform:scaleX(0.9731);">08/18/2025 04:40 AM</span><div class="b" style="left:309px;top:535.7px;width:49.6px;height:18px;border-radius:9px;background:#e9404c"></div><span class="t" style="left:316.55px;top:535px;font-size:13px;color:#4a0a24;transform:scaleX(0.9169);">Delete</span><span class="t" style="left:466.40px;top:535px;font-size:13px;color:#e4e5ee;transform:scaleX(0.7955);">GIS</span><span class="t" style="left:683.10px;top:535px;font-size:13px;color:#e4e5ee;transform:scaleX(0.9269);">WO#12-345</span><span class="t" style="left:841.70px;top:535px;font-size:13px;color:#e4e5ee;transform:scaleX(0.9136);">Jason Technician</span><div class="b" style="left:75.2px;top:560.9px;width:1130.1px;height:1px;background:#1d1d40;"></div><span class="t" style="left:89.00px;top:571px;font-size:13px;color:#e4e5ee;transform:scaleX(0.9731);">08/18/2025 04:39 AM</span><div class="b" style="left:309px;top:570.95px;width:53.2px;height:18px;border-radius:9px;background:#4fc5cd"></div><span class="t" style="left:316.60px;top:571px;font-size:13px;color:#0a2350;transform:scaleX(0.9075);">Update</span><span class="t" style="left:466.40px;top:571px;font-size:13px;color:#e4e5ee;transform:scaleX(0.9455);">Account Management</span><span class="t" style="left:683.10px;top:571px;font-size:13px;color:#e4e5ee;transform:scaleX(0.9112);">User ID 12-345</span><span class="t" style="left:842.00px;top:571px;font-size:13px;color:#e4e5ee;transform:scaleX(0.9080);">System Update</span><div class="b" style="left:75.2px;top:597.2px;width:1130.1px;height:36px;background:#0f0f32;"></div><div class="b" style="left:75.2px;top:596.7px;width:1130.1px;height:1px;background:#1d1d40;"></div><span class="t" style="left:89.00px;top:606px;font-size:13px;color:#e4e5ee;transform:scaleX(0.9731);">08/18/2025 04:40 AM</span><div class="b" style="left:309px;top:606.5px;width:53.2px;height:18px;border-radius:9px;background:#4fc5cd"></div><span class="t" style="left:316.60px;top:606px;font-size:13px;color:#0a2350;transform:scaleX(0.9075);">Update</span><span class="t" style="left:466.40px;top:606px;font-size:13px;color:#e4e5ee;transform:scaleX(0.9455);">Account Management</span><span class="t" style="left:683.10px;top:606px;font-size:13px;color:#e4e5ee;transform:scaleX(0.9112);">User ID 12-345</span><span class="t" style="left:841.70px;top:606px;font-size:13px;color:#e4e5ee;transform:scaleX(0.9382);">Joan Admin</span><div class="b" style="left:75.2px;top:632.7px;width:1130.1px;height:1px;background:#1d1d40;"></div><span class="t" style="left:89.00px;top:642px;font-size:13px;color:#e4e5ee;transform:scaleX(0.9731);">08/18/2025 04:39 AM</span><div class="b" style="left:309px;top:641.8px;width:53.2px;height:18px;border-radius:9px;background:#4fc5cd"></div><span class="t" style="left:316.60px;top:642px;font-size:13px;color:#0a2350;transform:scaleX(0.9075);">Update</span><span class="t" style="left:466.40px;top:642px;font-size:13px;color:#e4e5ee;transform:scaleX(0.9276);">Locations</span><span class="t" style="left:683.10px;top:642px;font-size:13px;color:#e4e5ee;transform:scaleX(0.9165);">User L 1234</span><span class="t" style="left:842.00px;top:642px;font-size:13px;color:#e4e5ee;transform:scaleX(0.9418);">Nicki Support...</span><div class="b" style="left:73.6px;top:668px;width:1131.7px;height:36px;background:#0f0f32;"></div><div class="b" style="left:73.6px;top:667.5px;width:1131.7px;height:1px;background:#1d1d40;"></div><span class="t" style="left:87.40px;top:677px;font-size:13px;color:#e4e5ee;transform:scaleX(0.9731);">08/18/2025 04:40 AM</span><div class="b" style="left:307.4px;top:677.5px;width:53.2px;height:18px;border-radius:9px;background:#4fc5cd"></div><span class="t" style="left:315.00px;top:677px;font-size:13px;color:#0a2350;transform:scaleX(0.9075);">Update</span><span class="t" style="left:464.80px;top:677px;font-size:13px;color:#e4e5ee;transform:scaleX(0.9455);">Account Management</span><span class="t" style="left:681.50px;top:677px;font-size:13px;color:#e4e5ee;transform:scaleX(0.9112);">User ID 12-345</span><span class="t" style="left:840.10px;top:677px;font-size:13px;color:#e4e5ee;transform:scaleX(0.9382);">Joan Admin</span><div class="b" style="left:73.6px;top:703.5px;width:1131.7px;height:1px;background:#1d1d40;"></div><span class="t" style="left:87.40px;top:711px;font-size:13px;color:#e4e5ee;transform:scaleX(0.9731);">08/18/2025 04:39 AM</span><div class="b" style="left:307.4px;top:711.6px;width:53.2px;height:18px;border-radius:9px;background:#4fc5cd"></div><span class="t" style="left:315.00px;top:711px;font-size:13px;color:#0a2350;transform:scaleX(0.9075);">Update</span><span class="t" style="left:464.80px;top:711px;font-size:13px;color:#e4e5ee;transform:scaleX(0.9276);">Locations</span><span class="t" style="left:681.50px;top:711px;font-size:13px;color:#e4e5ee;transform:scaleX(0.9165);">User L 1234</span><span class="t" style="left:840.40px;top:711px;font-size:13px;color:#e4e5ee;transform:scaleX(0.9396);">Nicki Support</span><div class="b" style="left:1205.6px;top:178.7px;width:7.1px;height:557px;border-radius:3.5px;background:#23233c"></div><div class="b" style="left:1205.6px;top:178.7px;width:7.1px;height:267px;border-radius:3.5px;background:#4b4b60"></div><div class="b" style="left:75.2px;top:739px;width:1139.2px;height:2px;background:#4b4b65;"></div><span class="t" style="left:113.30px;top:752px;font-size:13px;color:#9a9cb2;transform:scaleX(0.8362);">Page</span><div class="b" style="left:146.2px;top:746.8px;width:57.7px;height:28.5px;box-sizing:border-box;border:2px solid #797d8b;border-radius:3px;background:#04173e"></div><span class="t" style="left:172.20px;top:752px;font-size:13px;color:#f0f1f7;transform:scaleX(0.5655);-webkit-text-stroke:0.3px #f0f1f7;">1</span><span class="t" style="left:210.30px;top:752px;font-size:13px;color:#9a9cb2;transform:scaleX(0.9844);">of 1000</span><span class="t" style="left:1102.60px;top:752px;font-size:13px;color:#9a9cb2;transform:scaleX(0.9197);">Items</span><div class="b" style="left:1146.2px;top:746.8px;width:57.1px;height:28.5px;box-sizing:border-box;border:2px solid #797d8b;border-radius:3px;background:#04173e"></div><span class="t" style="left:1153.80px;top:752px;font-size:13px;color:#f0f1f7;transform:scaleX(0.9172);-webkit-text-stroke:0.3px #f0f1f7;">25</span><svg class="b" style="left:0px;top:0px;" width="1241" height="786" viewBox="0 0 1241 786"><path d="M20.6 58.8 L25.3 63.1 L20.6 67.5 M26 58.8 L30.8 63.1 L26 67.5" fill="none" stroke="#fff" stroke-width="1.7"/><g fill="none" stroke="#fff" stroke-width="1.6"><rect x="17.6" y="104.8" width="3.8" height="5"/><rect x="24.6" y="104.8" width="9" height="5"/><rect x="17.6" y="112.8" width="8.8" height="5"/><rect x="29.6" y="112.8" width="4" height="5"/></g><g fill="none" stroke="#fff" stroke-width="1.7"><path d="M22 144.7 H19.4 V160.3 H32.2 V144.7 H29.6"/><rect x="22.9" y="144.4" width="5.8" height="3.6" fill="#fff"/></g><rect x="24.2" y="145.9" width="2.9" height="0.9" fill="#23233c"/><g fill="none" stroke="#fff"><path d="M25.6 186.2 L32.4 190 V197.8 L25.6 201.7 L18.8 197.8 V190 Z" stroke-width="2"/><path d="M25.5 189.8 V198 M22 191.3 V196.6 M29 191.3 V196.6" stroke-width="1.7"/></g><g fill="none" stroke="#fff" stroke-width="1.7"><rect x="18.9" y="227.9" width="13.7" height="14.3"/><path d="M18.9 232.2 H32.6"/></g><g fill="#fff"><rect x="24.6" y="234.2" width="1.7" height="1.7"/><rect x="28.2" y="234.2" width="1.7" height="1.7"/><rect x="21.2" y="237.7" width="1.7" height="1.7"/><rect x="28.2" y="237.7" width="1.7" height="1.7"/></g><g fill="none" stroke="#fff" stroke-width="1.7" stroke-linejoin="round"><path d="M26.5 270 L32.8 273.5 V280.7 L26.5 284.2 L20.3 280.7 V273.5 Z"/><path d="M20.3 273.5 L26.5 277 L32.8 273.5 M26.5 277 V284.2"/><path d="M23.6 268.2 L17.6 271.6 V279.6 L19.6 280.8"/></g><path d="M17.5 311.3 H29.6 L35 317 V321.1 H16.2 V312.6 A1.3 1.3 0 0 1 17.5 311.3 Z" fill="#fff"/><circle cx="20.3" cy="321.5" r="2.8" fill="#fff"/><circle cx="30.6" cy="321.5" r="2.8" fill="#fff"/><g fill="#23233c"><rect x="18.1" y="313.3" width="2.7" height="2.3"/><rect x="23.2" y="313.3" width="2.7" height="2.3"/><path d="M28.3 313.3 H29.2 L31.4 315.6 H28.3 Z"/><rect x="17.9" y="317.8" width="15.2" height="1"/><circle cx="20.3" cy="321.6" r="1"/><circle cx="30.6" cy="321.6" r="1"/></g><g fill="#fff"><rect x="17.8" y="350.7" width="2.9" height="12.3"/><rect x="22" y="357" width="2.9" height="6"/><rect x="26.2" y="352.4" width="2.9" height="10.6"/><rect x="30.6" y="354.9" width="2.9" height="8.1"/><rect x="17.8" y="365" width="16.1" height="1.9"/></g><path d="M23.50 689.48 L23.82 687.55 L26.98 687.55 L27.30 689.48 L29.83 690.95 L31.66 690.25 L33.25 693.00 L31.73 694.24 L31.73 697.16 L33.25 698.40 L31.66 701.15 L29.83 700.45 L27.30 701.92 L26.98 703.85 L23.82 703.85 L23.50 701.92 L20.97 700.45 L19.14 701.15 L17.55 698.40 L19.07 697.16 L19.07 694.24 L17.55 693.00 L19.14 690.25 L20.97 690.95 Z" fill="none" stroke="#fff" stroke-width="2" stroke-linejoin="round"/><circle cx="25.4" cy="695.7" r="2.7" fill="none" stroke="#fff" stroke-width="2"/><path d="M31.90 726.60 L35.10 726.60 M30.03 731.13 L32.29 733.39 M25.50 733.00 L25.50 736.20 M20.97 731.13 L18.71 733.39 M19.10 726.60 L15.90 726.60 M20.97 722.07 L18.71 719.81 M25.50 720.20 L25.50 717.00 M30.03 722.07 L32.29 719.81 " stroke="#fff" stroke-width="1.7" fill="none"/><circle cx="25.5" cy="726.6" r="4.6" fill="#fff"/><path d="M25.2 723.6 a3 3 0 0 0 0 6 Z" fill="#101028"/><circle cx="25.6" cy="757.8" r="7.75" fill="none" stroke="#fff" stroke-width="2.2"/><path d="M23 756.2 a2.65 2.5 0 1 1 4.1 2 c-1.1 .7 -1.5 1.1 -1.5 2" fill="none" stroke="#fff" stroke-width="2.1"/><rect x="24.55" y="761.1" width="2.1" height="2" fill="#fff"/><path d="M166.75 150.55 h8.2 l-4.1 5 z M170.85 155.40 v4.6" fill="none" stroke="#6aeeae" stroke-width="1.5" stroke-linejoin="miter"/><path d="M377.65 150.55 h8.2 l-4.1 5 z M381.75 155.40 v4.6" fill="none" stroke="#6aeeae" stroke-width="1.5" stroke-linejoin="miter"/><path d="M542.85 150.55 h8.2 l-4.1 5 z M546.95 155.40 v4.6" fill="none" stroke="#6aeeae" stroke-width="1.5" stroke-linejoin="miter"/><path d="M915.85 150.55 h8.2 l-4.1 5 z M919.95 155.40 v4.6" fill="none" stroke="#6aeeae" stroke-width="1.5" stroke-linejoin="miter"/><path d="M1126.40 186.85 l7 6.3 l-7 6.3" fill="none" stroke="#fff" stroke-width="1.6"/><path d="M1126.40 222.50 l7 6.3 l-7 6.3" fill="none" stroke="#fff" stroke-width="1.6"/><path d="M1126.40 257.60 l7 6.3 l-7 6.3" fill="none" stroke="#fff" stroke-width="1.6"/><path d="M1126.40 293.05 l7 6.3 l-7 6.3" fill="none" stroke="#fff" stroke-width="1.6"/><path d="M1126.40 329.00 l7 6.3 l-7 6.3" fill="none" stroke="#fff" stroke-width="1.6"/><path d="M1126.40 364.15 l7 6.3 l-7 6.3" fill="none" stroke="#fff" stroke-width="1.6"/><path d="M1124.80 399.50 l7 6.3 l-7 6.3" fill="none" stroke="#fff" stroke-width="1.6"/><path d="M1124.80 433.80 l7 6.3 l-7 6.3" fill="none" stroke="#fff" stroke-width="1.6"/><path d="M1126.40 468.40 l7 6.3 l-7 6.3" fill="none" stroke="#fff" stroke-width="1.6"/><path d="M1126.40 503.80 l7 6.3 l-7 6.3" fill="none" stroke="#fff" stroke-width="1.6"/><path d="M1126.40 539.00 l7 6.3 l-7 6.3" fill="none" stroke="#fff" stroke-width="1.6"/><path d="M1126.40 574.25 l7 6.3 l-7 6.3" fill="none" stroke="#fff" stroke-width="1.6"/><path d="M1126.40 609.80 l7 6.3 l-7 6.3" fill="none" stroke="#fff" stroke-width="1.6"/><path d="M1126.40 645.10 l7 6.3 l-7 6.3" fill="none" stroke="#fff" stroke-width="1.6"/><path d="M1124.80 680.80 l7 6.3 l-7 6.3" fill="none" stroke="#fff" stroke-width="1.6"/><path d="M1124.80 714.90 l7 6.3 l-7 6.3" fill="none" stroke="#fff" stroke-width="1.6"/><circle cx="87.1" cy="103.2" r="4.1" fill="none" stroke="#f4f4fa" stroke-width="1.5"/><path d="M90.1 106.2 L93.8 109.6" stroke="#f4f4fa" stroke-width="1.7"/><g fill="none" stroke="#52cbd2" stroke-width="1.9"><path d="M1142.3 62.2 A6.9 6.9 0 0 1 1155 59.3"/><path d="M1156.4 55 V60.5 H1150.9"/><path d="M1155.9 63.9 A6.9 6.9 0 0 1 1143.2 66.8"/><path d="M1141.8 71.1 V65.6 H1147.3"/></g><path d="M92 756.4 L87 761 L92 765.7" fill="none" stroke="#8a8ca2" stroke-width="1.9"/><path d="M274.4 756.4 L279.6 761 L274.4 765.7" fill="none" stroke="#fff" stroke-width="1.9"/><path d="M1184.8 758.6 L1189.4 763.3 L1194 758.6" fill="none" stroke="#d8dae6" stroke-width="1.7"/></svg></div>
<div class="b" style="left:0;top:1px;width:2500px;height:782px;overflow:hidden"><div class="b" style="left:0;top:-1px;width:2500px;height:786px;will-change:transform"><div class="b" style="left:2027.2px;top:2px;width:471px;height:781px;background:#000028;box-shadow:-1px 0 3px 1px rgba(0,0,0,.75),-4px 0 9px 2px rgba(0,0,0,.45)"></div><div class="b" style="left:2498px;top:2px;width:1px;height:781px;background:#0c0c1e;"></div><div class="b" style="left:2499px;top:2px;width:1px;height:781px;background:#4a4a58;"></div><div class="b" style="left:2027.2px;top:48px;width:470.8px;height:2px;background:#1a1a40;"></div><div class="b" style="left:2027.2px;top:1px;width:470.8px;height:1px;background:#252538;"></div><span class="t" style="left:2055.40px;top:68px;font-size:14px;font-weight:700;color:#ffffff;transform:scaleX(0.9536);">Event Details</span><div class="b" style="left:2054.7px;top:106px;width:53.2px;height:18px;border-radius:9px;background:#4fc5cd"></div><span class="t" style="left:2062.30px;top:106px;font-size:13px;color:#0a2350;transform:scaleX(0.9075);">Update</span><span class="t" style="left:2055.30px;top:143px;font-size:13px;font-weight:700;color:#ffffff;transform:scaleX(0.9304);">Changed on</span><span class="t" style="left:2160.20px;top:143px;font-size:13px;color:#f6f7fb;transform:scaleX(0.9521);-webkit-text-stroke:0.45px #f6f7fb;">08/18/2025 4:46 AM</span><span class="t" style="left:2055.30px;top:187px;font-size:13px;font-weight:700;color:#ffffff;transform:scaleX(0.9042);">Record Type</span><span class="t" style="left:2160.20px;top:187px;font-size:13px;color:#f6f7fb;transform:scaleX(0.9528);-webkit-text-stroke:0.45px #f6f7fb;">Locations</span><span class="t" style="left:2055.30px;top:229px;font-size:13px;font-weight:700;color:#ffffff;transform:scaleX(0.9026);">Record ID</span><span class="t" style="left:2160.30px;top:229px;font-size:13px;color:#f6f7fb;transform:scaleX(0.9110);-webkit-text-stroke:0.45px #f6f7fb;">ID L 5587</span><span class="t" style="left:2055.30px;top:272px;font-size:13px;font-weight:700;color:#ffffff;transform:scaleX(0.9304);">Changed by</span><span class="t" style="left:2160.30px;top:272px;font-size:13px;color:#f6f7fb;transform:scaleX(0.9367);-webkit-text-stroke:0.45px #f6f7fb;">Jason Technician</span><span class="t" style="left:2058.70px;top:334px;font-size:13px;font-weight:700;color:#ffffff;transform:scaleX(0.9021);">Field</span><span class="t" style="left:2190.00px;top:334px;font-size:13px;font-weight:700;color:#ffffff;transform:scaleX(0.8973);">Before</span><span class="t" style="left:2409.40px;top:334px;font-size:13px;font-weight:700;color:#ffffff;transform:scaleX(0.9679);">After</span><div class="b" style="left:2052px;top:358.2px;width:393.2px;height:1px;background:#2b2b4c;"></div><span class="t" style="left:2058.70px;top:365px;font-size:13px;color:#e4e5ee;transform:scaleX(0.9126);">Name</span><span class="t" style="left:2190.00px;top:365px;font-size:13px;color:#e4e5ee;transform:scaleX(0.8850);">Chem Lab</span><span class="t" style="left:2337.20px;top:365px;font-size:13px;color:#e4e5ee;transform:scaleX(0.9228);">Chemistry Lab 221</span><svg class="b" style="left:2027px;top:0px;" width="473" height="60" viewBox="0 0 473 60"><path d="M18.9 19.7 L30.9 31.7 M30.9 19.7 L18.9 31.7" stroke="#fff" stroke-width="2.2" stroke-linecap="round" fill="none"/></svg></div></div>
</body></html>
